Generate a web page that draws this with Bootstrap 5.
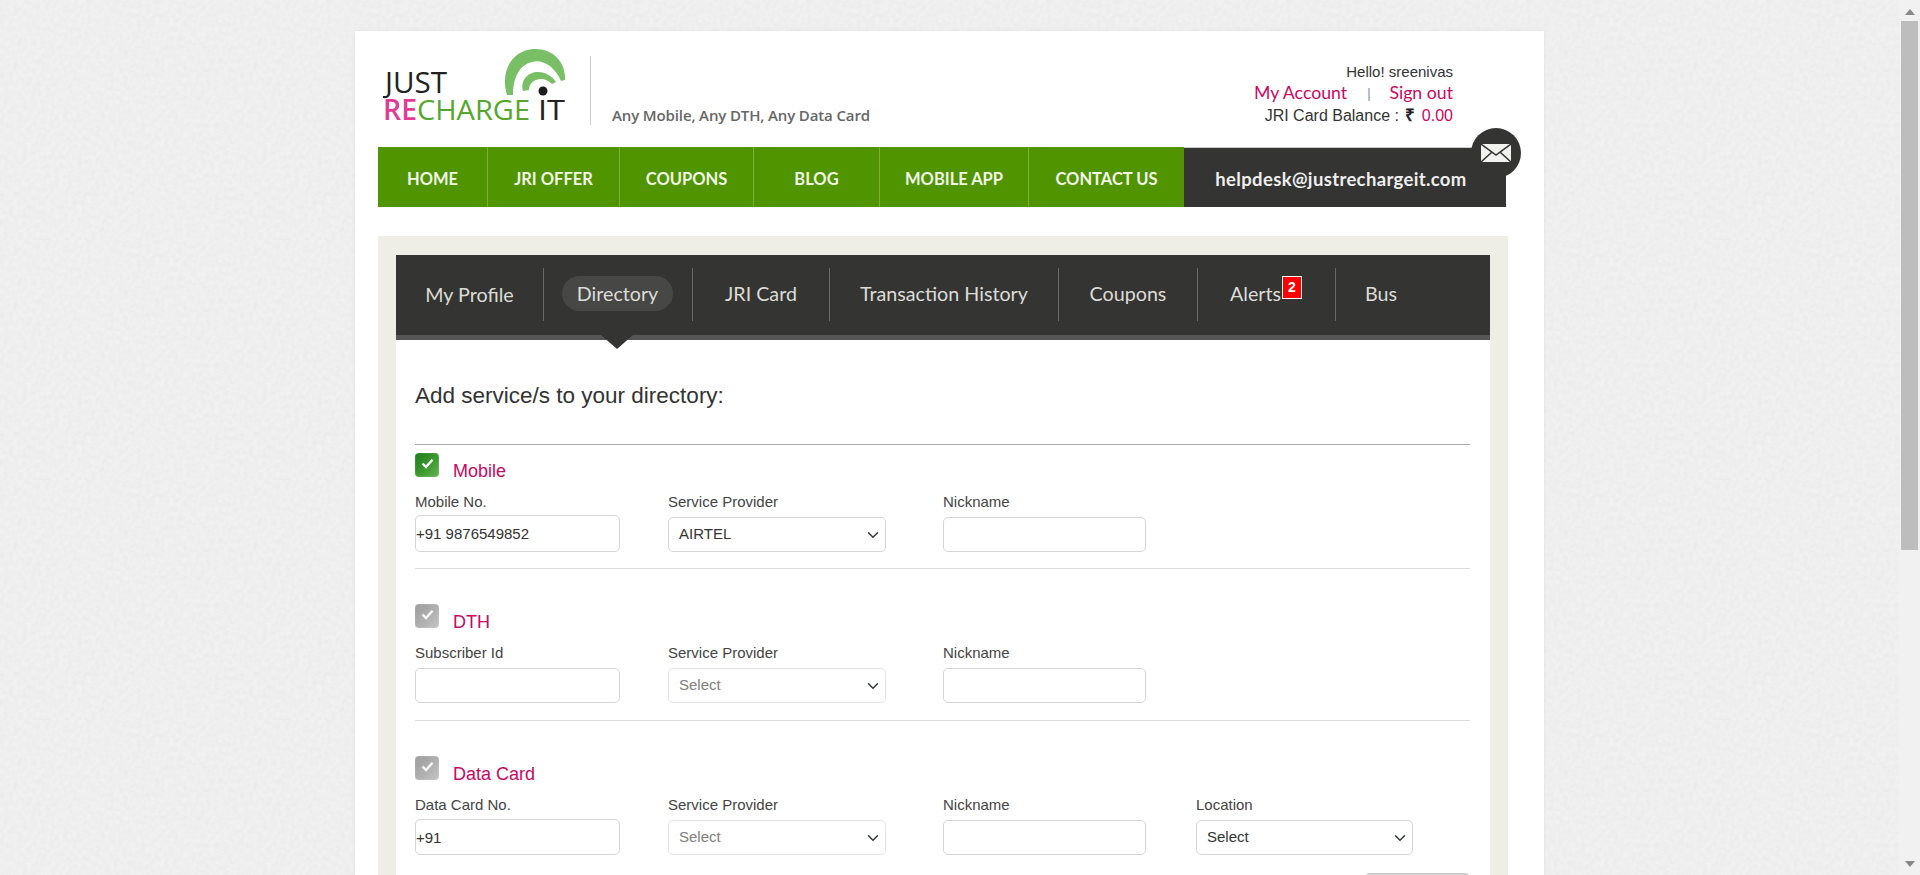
<!DOCTYPE html>
<html lang="en">
<head>
    <meta charset="UTF-8">
    <meta name="viewport" content="width=device-width, initial-scale=1.0">
    <title>Directory - Just Recharge It</title>
    <link rel="stylesheet" href="https://cdn.jsdelivr.net/npm/bootstrap@5.3.0/dist/css/bootstrap.min.css">
    <script src="https://cdn.jsdelivr.net/npm/bootstrap@5.3.0/dist/js/bootstrap.bundle.min.js"></script>
    <style>
        body {
            background-color: #f1f1f1;
            background-image: url("data:image/svg+xml,%3Csvg xmlns='http://www.w3.org/2000/svg' width='240' height='240'%3E%3Cfilter id='n'%3E%3CfeTurbulence type='fractalNoise' baseFrequency='.22' numOctaves='3' stitchTiles='stitch'/%3E%3CfeColorMatrix values='0 0 0 0 .7 0 0 0 0 .7 0 0 0 0 .7 .45 0 0 0 -.12'/%3E%3C/filter%3E%3Crect width='240' height='240' filter='url(%23n)'/%3E%3C/svg%3E");
            font-family: "Liberation Sans", Arial, sans-serif;
            font-size: 14px;
            color: #333;
        }
        /* window scrollbar of the screenshot */
        .fake-scroll {
            position: fixed; top: 0; right: 0; bottom: 0;
            width: 21px;
            background: #f1f1f1;
            display: flex; flex-direction: column; align-items: center; justify-content: space-between;
            padding-top: 9px; padding-bottom: 8px;
        }
        .fake-scroll svg { display: block; }
        .scroll-thumb { position: absolute; top: 21px; left: 2px; width: 17px; height: 529px; background: #bdbdbd; }

        .page-box {
            width: 1189px;
            min-height: 1347px;
            margin: 31px 0 0 355px;
            background: #fff;
            padding: 0 36px 0 23px;
            box-shadow: 0 0 3px rgba(0, 0, 0, .08);
        }
        .site-top { height: 116px; }
        .logo-box { width: 212px; padding: 17px 0 0 0; margin-left: 5px; }
        .logo-box svg { display: block; }
        .tagline {
            border-left: 1px solid #ccc;
            height: 69px;
            margin-top: 25px;
            margin-left: -5px;
            width: 300px;
            padding: 50px 0 0 21px;
            font: 600 15px/18px "Open Sans", sans-serif;
            letter-spacing: -.13px;
            color: #666;
            white-space: nowrap;
        }
        .top-links { width: 450px; text-align: right; padding: 32px 0 0; margin-left: auto; margin-right: 55px; }
        .top-links .hello { font-size: 15px; line-height: 18px; height: 18px; }
        .top-links .acct { font: 400 17.7px/24px Lato, sans-serif; height: 24px; color: #5b7bb0; }
        .top-links .bal { font-size: 16px; line-height: 22px; }
        .top-links .rupee { font-weight: 700; font-size: 17px; margin: 0 2px; color: #222; }
        .top-links a { color: #c9085f; text-decoration: none; }
        .top-links .pipe { margin: 0 19px 0 20px; font-size: 13px; }
        .top-links b { font-weight: 400; color: #c9085f; }

        .main-nav { height: 60px; background: #509400; width: 1128px; position: relative; }
        .main-nav a {
            display: flex; align-items: center; justify-content: center;
            height: 60px;
            padding-top: 4px;
            color: #f1f6e8;
            font: 700 16.5px/1 Lato, sans-serif;
            text-decoration: none;
            border-right: 1px solid #7cae48;
        }
        .w1 { width: 110px; } .w2 { width: 132px; } .w3 { width: 134px; } .w4 { width: 126px; } .w5 { width: 149px; } .w6 { width: 155px; }
        .main-nav a.w6 { border-right: 0; }
        .mail-part {
            flex: 1;
            display: flex; align-items: center; justify-content: center;
            background: #343432;
            border-top: 1px solid #ccc;
            color: #eee;
            font: 700 18.5px/1 Lato, sans-serif;
            letter-spacing: .35px;
            padding-right: 8px;
            padding-top: 4px;
        }
        .mail-dot {
            position: absolute; right: -15px; top: -19px;
            width: 50px; height: 50px; border-radius: 50%;
            background: #343432;
            display: flex; align-items: center; justify-content: center;
        }

        .beige-panel { background: #eeeee6; margin-top: 29px; width: 1130px; padding: 19px 18px 0; }
        .tab-bar { height: 85px; background: #343432; border-bottom: 5px solid #555; position: relative; }
        .tab-bar .tab-item {
            height: 53px; margin-top: 13px;
            display: flex; align-items: center; justify-content: center;
            color: #dcdcd8;
            font: 400 19.7px/1 Lato, sans-serif;
            padding-bottom: 2px;
            border-right: 1px solid #6a6a66;
            position: relative;
        }
        .t1 { width: 148px; } .t2 { width: 149px; } .t3 { width: 137px; } .t4 { width: 229px; } .t5 { width: 139px; } .t6 { width: 138px; } .t7 { width: 90px; }
        .tab-bar .tab-item.t1 { padding: 1px 0 0; }
        .tab-bar .tab-item.t6 { padding-right: 22px; }
        .tab-bar .tab-item.t7 { border-right: 0; }
        .pill { background: #474745; border-radius: 18px; padding: 8px 15px; margin-left: -1px; }
        .tab-tip {
            position: absolute; left: 205px; bottom: -14px;
            border-left: 16px solid transparent; border-right: 16px solid transparent;
            border-top: 14px solid #343432;
        }
        .alert-num {
            position: absolute; left: 84px; top: 8px;
            width: 20px; height: 23px;
            background: #f00; border: 1px solid #fff;
            color: #fff;
            font: 700 14px/20px "Liberation Sans", sans-serif;
            text-align: center;
        }

        .form-panel { background: #fff; padding: 0 20px 0 19px; height: 1000px; }
        .form-title { font-size: 22.5px; line-height: 26px; padding-top: 43px; height: 104px; color: #333; margin: 0; font-weight: 400; }
        .dir-block { border-top: 1px solid #aaa; padding-top: 8px; height: 124px; }
        .dir-block.next { border-top-color: #ddd; padding-top: 35px; height: 152px; }
        .tick {
            width: 24px; height: 24px; border-radius: 4px;
            background: linear-gradient(135deg, #1a7a1a, #3d9a30 55%, #66b455);
            box-shadow: inset 0 0 2px rgba(255, 255, 255, .35);
            display: flex; align-items: center; justify-content: center;
            padding-bottom: 3px;
            margin-right: 14px;
        }
        .tick.off { background: linear-gradient(135deg, #9c9c9c, #b0b0b0 55%, #c4c4c4); }
        .svc-name { font-size: 18px; line-height: 20px; color: #c9085f; padding-top: 8px; }
        .field { margin-top: 12px; }
        .f1 { width: 253px; } .f2 { width: 275px; } .f3 { width: 253px; } .f4 { width: 217px; }
        .field label { display: block; font-size: 15px; line-height: 18px; margin-bottom: 6px; color: #444; }
        .f1 .form-control { width: 205px; }
        .f2 .form-select { width: 218px; }
        .f3 .form-control { width: 203px; }
        .form-control, .form-select {
            font-size: 15px; height: 35px; border-radius: 5px;
            border-color: #d5d5d5; color: #333; padding-top: 2px; padding-bottom: 2px;
            box-shadow: none;
        }
        .form-control { padding-left: 0; }
        .form-select { padding-left: 10px; background-position: right 4px center; }
        .form-select.dim { color: #808080; border-color: #e4e4e4; background-color: #fff; }
        .f1 .tall { height: 37px; margin-top: -2px; }
        .f1 .mid { height: 36px; margin-top: -1px; }
        .save-btn { width: 105px; height: 36px; display: block; background: #ccc; border: 0; border-radius: 5px; margin: 18px 0 0 auto; }
    </style>
</head>
<body>
<div class="page-box">

    <!-- header -->
    <div class="site-top d-flex">
        <div class="logo-box">
            <svg width="190" height="80" viewBox="0 0 190 80">
                <path d="M124 47 C117 24 128 3 150 1 C170 0 183 14 182 32 L178 33 C172 19 160 11 149 14 C136 17 130 30 130 47 Z" fill="#78bf66"/>
                <path d="M140 43 C137 32 145 24 155 24 C163 24 170 29 173 34 L169 36 C164 31 158 30 153 32 C148 34 146 38 146 42 Z" fill="#78bf66"/>
                <circle cx="160" cy="43" r="4.5" fill="#1c1c1c"/>
                <text x="2" y="45" font-family="Open Sans" font-size="29" fill="#222" textLength="62" lengthAdjust="spacingAndGlyphs">JUST</text>
                <text x="0" y="72" font-family="Open Sans" font-size="28" font-weight="600" fill="#e23b96" textLength="34" lengthAdjust="spacingAndGlyphs">RE</text>
                <text x="34" y="72" font-family="Open Sans" font-size="28" font-weight="500" fill="#55a82b" textLength="113" lengthAdjust="spacingAndGlyphs">CHARGE</text>
                <text x="155" y="72" font-family="Open Sans" font-size="28" fill="#222" textLength="27" lengthAdjust="spacingAndGlyphs">IT</text>
            </svg>
        </div>
        <div class="tagline">Any Mobile, Any DTH, Any Data Card</div>
        <div class="top-links">
            <div class="hello">Hello! sreenivas</div>
            <div class="acct"><a href="#">My Account</a><span class="pipe">|</span><a href="#">Sign out</a></div>
            <div class="bal">JRI Card Balance : <span class="rupee">₹</span> <b>0.00</b></div>
        </div>
    </div>

    <div class="main-nav d-flex">
        <a class="w1" href="#">HOME</a>
        <a class="w2" href="#">JRI OFFER</a>
        <a class="w3" href="#">COUPONS</a>
        <a class="w4" href="#">BLOG</a>
        <a class="w5" href="#">MOBILE APP</a>
        <a class="w6" href="#">CONTACT US</a>
        <div class="mail-part">helpdesk@justrechargeit.com</div>
        <div class="mail-dot">
            <svg width="30" height="18" viewBox="0 0 30 18">
                <rect width="30" height="18" fill="#f2f2ee"/>
                <path d="M0 0 L15 11 L30 0 M0 18 L11 8 M30 18 L19 8" fill="none" stroke="#343432" stroke-width="1.5"/>
            </svg>
        </div>
    </div>

    <div class="beige-panel">
        <div class="tab-bar d-flex">
            <div class="tab-item t1">My Profile</div>
            <div class="tab-item t2"><span class="pill">Directory</span></div>
            <div class="tab-item t3">JRI Card</div>
            <div class="tab-item t4">Transaction History</div>
            <div class="tab-item t5">Coupons</div>
            <div class="tab-item t6">Alerts<span class="alert-num">2</span></div>
            <div class="tab-item t7">Bus</div>
            <span class="tab-tip"></span>
        </div>

        <div class="form-panel">
            <h4 class="form-title">Add service/s to your directory:</h4>

            <div class="dir-block">
                <div class="d-flex">
                    <span class="tick"><svg width="13" height="11" viewBox="0 0 13 11"><path d="M1.5 5.5 L5 9 L11.5 1.8" fill="none" stroke="#fff" stroke-width="2.4"/></svg></span>
                    <span class="svc-name">Mobile</span>
                </div>
                <div class="d-flex field">
                    <div class="f1"><label>Mobile No.</label><input class="form-control tall" value="+91 9876549852"></div>
                    <div class="f2"><label>Service Provider</label><select class="form-select"><option>AIRTEL</option></select></div>
                    <div class="f3"><label>Nickname</label><input class="form-control"></div>
                </div>
            </div>

            <div class="dir-block next">
                <div class="d-flex">
                    <span class="tick off"><svg width="13" height="11" viewBox="0 0 13 11"><path d="M1.5 5.5 L5 9 L11.5 1.8" fill="none" stroke="#fff" stroke-width="2.4"/></svg></span>
                    <span class="svc-name">DTH</span>
                </div>
                <div class="d-flex field">
                    <div class="f1"><label>Subscriber Id</label><input class="form-control"></div>
                    <div class="f2"><label>Service Provider</label><select class="form-select dim"><option>Select</option></select></div>
                    <div class="f3"><label>Nickname</label><input class="form-control"></div>
                </div>
            </div>

            <div class="dir-block next">
                <div class="d-flex">
                    <span class="tick off"><svg width="13" height="11" viewBox="0 0 13 11"><path d="M1.5 5.5 L5 9 L11.5 1.8" fill="none" stroke="#fff" stroke-width="2.4"/></svg></span>
                    <span class="svc-name">Data Card</span>
                </div>
                <div class="d-flex field">
                    <div class="f1"><label>Data Card No.</label><input class="form-control mid" value="+91"></div>
                    <div class="f2"><label>Service Provider</label><select class="form-select dim"><option>Select</option></select></div>
                    <div class="f3"><label>Nickname</label><input class="form-control"></div>
                    <div class="f4"><label>Location</label><select class="form-select"><option>Select</option></select></div>
                </div>
                <button class="save-btn" type="button" aria-label="Save"></button>
            </div>
        </div>
    </div>
</div>

<div class="fake-scroll">
    <svg width="10" height="6" viewBox="0 0 10 6"><path d="M5 0 L10 6 H0 Z" fill="#888"/></svg>
    <span class="scroll-thumb"></span>
    <svg width="10" height="6" viewBox="0 0 10 6"><path d="M5 6 L10 0 H0 Z" fill="#888"/></svg>
</div>
</body>
</html>
